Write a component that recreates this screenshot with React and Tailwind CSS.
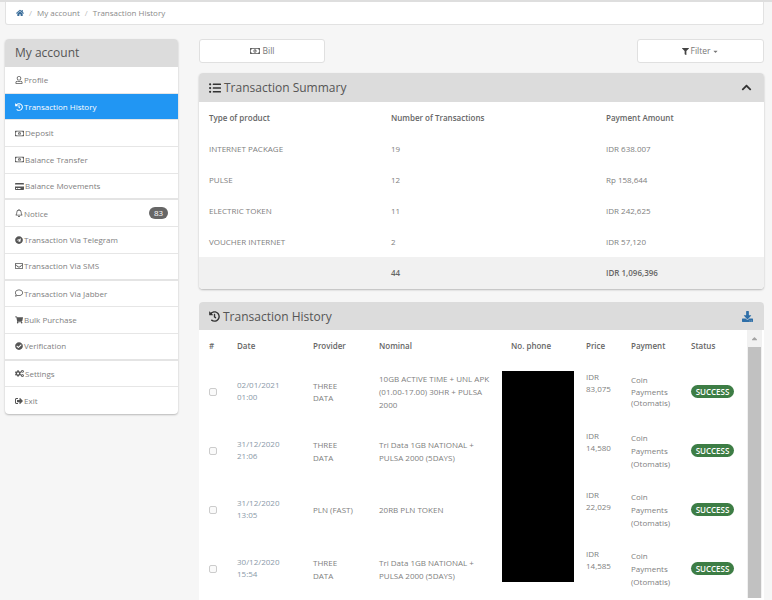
import {
  FaHome, FaRegUser, FaHistory, FaRegMoneyBillAlt, FaCreditCard, FaRegBell, FaTelegram,
  FaRegEnvelope, FaRegComment, FaShoppingCart, FaCheckCircle, FaCogs, FaSignOutAlt,
  FaListUl, FaFilter, FaChevronUp, FaDownload, FaCaretDown, FaCaretUp,
} from "react-icons/fa";

const menu = [
  { label: "Profile", icon: FaRegUser },
  { label: "Transaction History", icon: FaHistory, active: true },
  { label: "Deposit", icon: FaRegMoneyBillAlt, wide: true },
  { label: "Balance Transfer", icon: FaRegMoneyBillAlt, wide: true },
  { label: "Balance Movements", icon: FaCreditCard, wide: true, thick: true },
  { label: "Notice", icon: FaRegBell, badge: "83" },
  { label: "Transaction Via Telegram", icon: FaTelegram },
  { label: "Transaction Via SMS", icon: FaRegEnvelope, thick: true },
  { label: "Transaction Via Jabber", icon: FaRegComment },
  { label: "Bulk Purchase", icon: FaShoppingCart },
  { label: "Verification", icon: FaCheckCircle, thick: true },
  { label: "Settings", icon: FaCogs, wide: true },
  { label: "Exit", icon: FaSignOutAlt, last: true },
];

const summary = [
  ["INTERNET PACKAGE", "19", "IDR 638.007"],
  ["PULSE", "12", "Rp 158,644"],
  ["ELECTRIC TOKEN", "11", "IDR 242,625"],
  ["VOUCHER INTERNET", "2", "IDR 57,120"],
];

const history = [
  { date: ["02/01/2021", "01:00"], provider: ["THREE", "DATA"], nominal: ["10GB ACTIVE TIME + UNL APK", "(01.00-17.00) 30HR + PULSA", "2000"], price: ["IDR", "83,075"], tight: true },
  { date: ["31/12/2020", "21:06"], provider: ["THREE", "DATA"], nominal: ["Tri Data 1GB NATIONAL +", "PULSA 2000 (5DAYS)"], price: ["IDR", "14,580"] },
  { date: ["31/12/2020", "13:05"], provider: ["PLN (FAST)"], nominal: ["20RB PLN TOKEN"], price: ["IDR", "22,029"] },
  { date: ["30/12/2020", "15:54"], provider: ["THREE", "DATA"], nominal: ["Tri Data 1GB NATIONAL +", "PULSA 2000 (5DAYS)"], price: ["IDR", "14,585"] },
];

const cols = "grid grid-cols-[28px_76px_66px_132px_75px_45px_60px_1fr] pl-[10px]";

function Lines({ items }) {
  return items.map((t) => <div key={t}>{t}</div>);
}

export default function App() {
  return (
    <div className="h-[600px] overflow-hidden bg-[#f6f6f6] text-[8px] leading-[19.5px] text-[#808080] font-['Open_Sans',sans-serif]">
      <div className="h-[2px] bg-[#dedede]"></div>
      <div className="pl-[5px] pr-[8px]">
        {/* Breadcrumb */}
        <div className="h-[23px] flex items-center gap-[5px] pl-[10px] bg-white border border-[#e2e2e2] border-t-0 rounded-b-[3px] text-[#8a8a8a]">
          <FaHome className="text-[8px] text-[#3a6d9a]" />
          <span className="text-[#bbb]">/</span>
          <span>My account</span>
          <span className="text-[#bbb]">/</span>
          <span>Transaction History</span>
        </div>

        <div className="flex mt-[14px] items-start">
          {/* Sidebar */}
          <div className="w-[173px] shrink-0 rounded-[4px] bg-white shadow-[0_1px_2px_rgba(0,0,0,0.25)] overflow-hidden">
            <div className="h-[28px] bg-[#dcdcdc] pl-[10px] flex items-center text-[12px] text-[#555]">My account</div>
            {menu.map((m) => {
              const Icon = m.icon;
              return (
                <div
                  key={m.label}
                  className={
                    "h-[26.7px] flex items-center gap-[1px] pl-[10px] pr-[10px] " +
                    (m.active ? "bg-[#2196f3] text-white " : "") +
                    (m.last ? "" : m.thick ? "border-b-2 border-[#e4e4e4]" : "border-b border-[#e6e6e6]")
                  }
                >
                  <Icon className={(m.wide ? "text-[9px]" : "text-[8px]") + " shrink-0 " + (m.active ? "text-white" : "text-[#555]")} />
                  <span>{m.label}</span>
                  {m.badge && (
                    <span className="ml-auto h-[12px] w-[19px] rounded-full bg-[#666] text-white text-[8px] leading-[12px] text-center">{m.badge}</span>
                  )}
                </div>
              );
            })}
          </div>

          {/* Main */}
          <div className="ml-[21px] flex-1 min-w-0">
            <div className="flex justify-between">
              <button className="w-[126px] h-[24px] bg-white border border-[#e0e0e0] rounded-[3px] flex items-center justify-center gap-[3px] text-[8.5px] text-[#777]">
                <FaRegMoneyBillAlt className="text-[10px] text-[#555]" /> Bill
              </button>
              <button className="w-[127px] h-[24px] bg-white border border-[#e0e0e0] rounded-[3px] flex items-center justify-center gap-[2px] text-[8.5px] text-[#777]">
                <FaFilter className="text-[7px] text-[#444]" /> Filter <FaCaretDown className="text-[7px]" />
              </button>
            </div>

            {/* Transaction Summary */}
            <div className="mt-[10px] bg-white rounded-[4px] shadow-[0_1px_2px_rgba(0,0,0,0.25)] overflow-hidden">
              <div className="h-[29px] bg-[#dcdcdc] flex items-center pl-[10px] pr-[12px] text-[12px] text-[#555]">
                <FaListUl className="text-[12px] text-[#333] mr-[3px]" />
                <span>Transaction Summary</span>
                <FaChevronUp className="ml-auto text-[11px] text-[#333]" />
              </div>
              <div className="grid grid-cols-[182px_215px_1fr] pl-[10px] h-[31px] pt-[6px] text-[#666] font-semibold">
                <div>Type of product</div>
                <div>Number of Transactions</div>
                <div>Payment Amount</div>
              </div>
              {summary.map((r) => (
                <div key={r[0]} className="grid grid-cols-[182px_215px_1fr] pl-[10px] h-[31px] items-center">
                  <div>{r[0]}</div>
                  <div>{r[1]}</div>
                  <div>{r[2]}</div>
                </div>
              ))}
              <div className="grid grid-cols-[182px_215px_1fr] pl-[10px] h-[32px] items-center bg-[#f1f1f1] text-[#666] font-semibold">
                <div></div>
                <div>44</div>
                <div>IDR 1,096,396</div>
              </div>
            </div>

            {/* Transaction History */}
            <div className="mt-[13px] bg-white rounded-[4px] overflow-hidden h-[400px]">
              <div className="h-[28px] bg-[#dcdcdc] flex items-center pl-[10px] pr-[11px] pt-[1px] text-[12px] text-[#555]">
                <FaHistory className="text-[11px] text-[#333] mr-[3px]" />
                <span>Transaction History</span>
                <FaDownload className="ml-auto text-[11px] text-[#2f6fa8]" />
              </div>
              <div className="flex">
                <div className="flex-1 min-w-0 relative">
                  <div className={cols + " h-[32px] items-center text-[#666] font-semibold"}>
                    <div>#</div>
                    <div>Date</div>
                    <div>Provider</div>
                    <div>Nominal</div>
                    <div>No. phone</div>
                    <div>Price</div>
                    <div>Payment</div>
                    <div>Status</div>
                  </div>
                  {history.map((h) => (
                    <div key={h.date[0] + h.date[1]} className={cols + " h-[59px] items-center"}>
                      <div>
                        <div className="w-[8px] h-[8px] border border-[#ccc] rounded-[2px] bg-[#fafafa]"></div>
                      </div>
                      <div className="text-[#8a99a8] leading-[11.5px] pb-[2px]"><Lines items={h.date} /></div>
                      <div className={h.tight ? "leading-[11.5px]" : "leading-[13px]"}><Lines items={h.provider} /></div>
                      <div className="leading-[13px]"><Lines items={h.nominal} /></div>
                      <div></div>
                      <div className="leading-[11.5px] pb-[18px]"><Lines items={h.price} /></div>
                      <div className={h.tight ? "leading-[11.5px]" : "leading-[13px]"}><Lines items={["Coin", "Payments", "(Otomatis)"]} /></div>
                      <div>
                        <span className="inline-block h-[13px] w-[43px] rounded-full bg-[#3d7d45] text-white text-[8px] leading-[13px] text-center font-semibold">SUCCESS</span>
                      </div>
                    </div>
                  ))}
                  {/* redacted numbers */}
                  <div className="absolute left-[303px] top-[41px] w-[72px] h-[211px] bg-black"></div>
                </div>
                {/* scrollbar */}
                <div className="w-[15px] mr-[2px] px-[1px] shrink-0 bg-[#f1f1f1] flex flex-col">
                  <div className="h-[17px] flex items-center justify-center">
                    <FaCaretUp className="text-[9px] text-[#a3a3a3]" />
                  </div>
                  <div className="flex-1 bg-[#c1c1c1]"></div>
                </div>
              </div>
            </div>
          </div>
        </div>
      </div>
    </div>
  );
}
